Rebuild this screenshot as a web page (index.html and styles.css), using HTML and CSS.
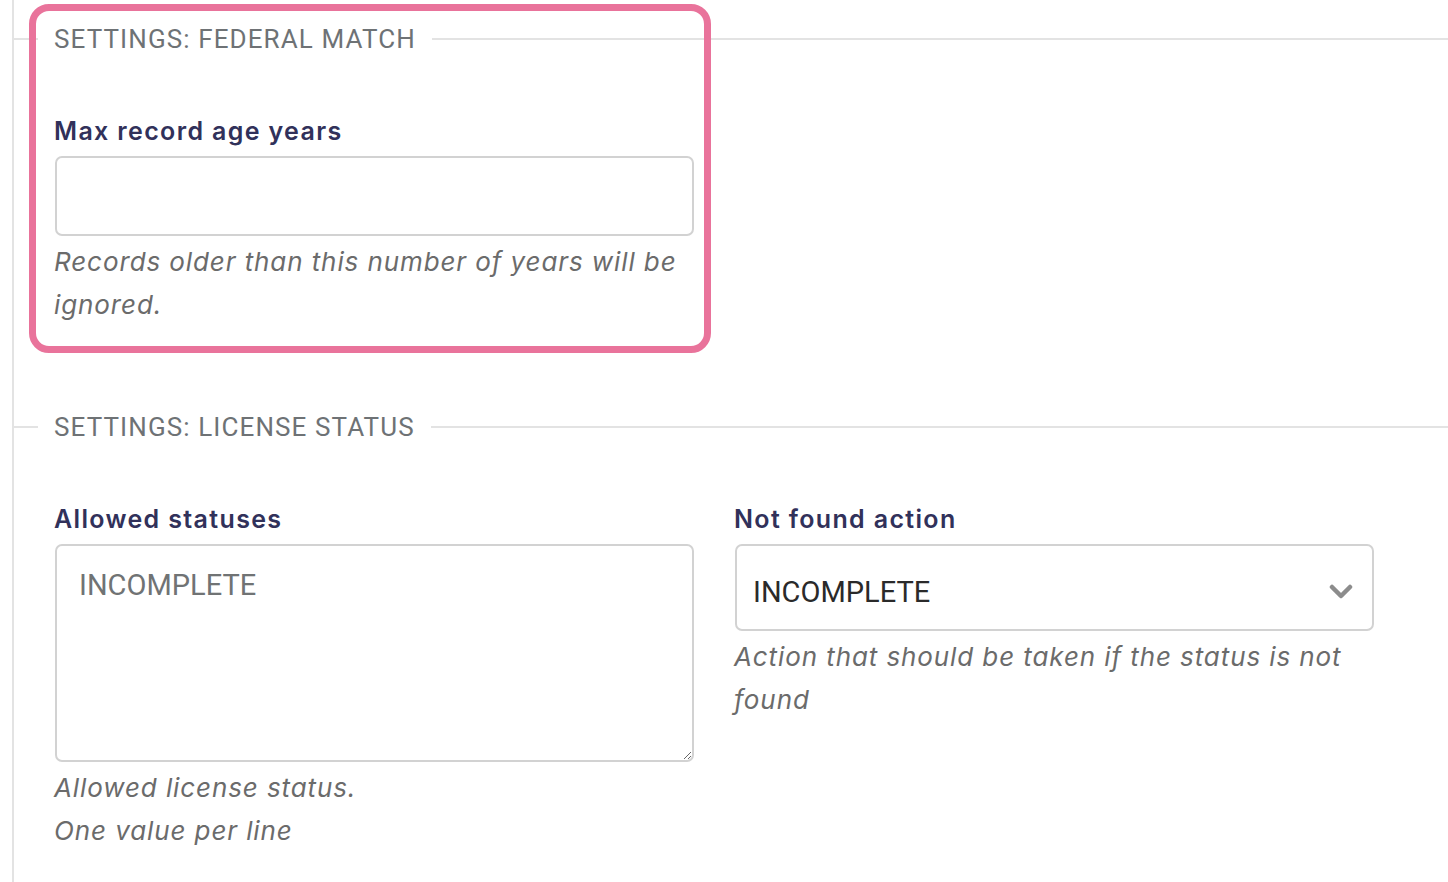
FILE: index.html
```html
<!DOCTYPE html>
<html lang="en">
<head>
<meta charset="utf-8">
<title>Settings</title>
<link rel="stylesheet" href="styles.css">
</head>
<body>
<div class="page">
  <fieldset class="group group-first">
    <legend class="group-title">SETTINGS: FEDERAL MATCH</legend>
    <div class="field field-single">
      <label class="field-label" for="maxage">Max record age years</label>
      <input class="text-input" id="maxage" type="text">
      <p class="field-help">Records older than this number of years will be ignored.</p>
    </div>
    <div class="highlight"></div>
  </fieldset>

  <fieldset class="group">
    <legend class="group-title">SETTINGS: LICENSE STATUS</legend>
    <div class="field-grid">
      <div class="field">
        <label class="field-label" for="allowed">Allowed statuses</label>
        <textarea class="text-area" id="allowed">INCOMPLETE</textarea>
        <p class="field-help">Allowed license status.<br>One value per line</p>
      </div>
      <div class="field">
        <label class="field-label" for="notfound">Not found action</label>
        <div class="select-wrap">
          <select class="select" id="notfound">
            <option>INCOMPLETE</option>
          </select>
          <svg class="chevron" width="24" height="16" viewBox="0 0 24 16" aria-hidden="true">
            <path d="M3 3 L12 12 L21 3" fill="none" stroke="#8c8c8c" stroke-width="4.5" stroke-linecap="round" stroke-linejoin="round"/>
          </svg>
        </div>
        <p class="field-help">Action that should be taken if the status is not found</p>
      </div>
    </div>
  </fieldset>
</div>
</body>
</html>
```

FILE: styles.css
```css
html, body {
  margin: 0;
  padding: 0;
  background: #ffffff;
}

body {
  font-family: Inter, "Liberation Sans", sans-serif;
  overflow: hidden;
  height: 882px;
}

.page {
  box-sizing: border-box;
  height: 882px;
  margin-left: 12px;
  padding-top: 24px;
  border-left: 2px solid #e3e3e3;
}

.group {
  position: relative;
  margin: 0;
  padding: 0 0 0 40px;
  border: none;
  border-top: 2px solid #e3e3e3;
  min-width: 0;
}

.group-first {
  padding-bottom: 86px;
}

.group-title {
  font-family: Roboto, "Liberation Sans", sans-serif;
  font-size: 26px;
  line-height: 30px;
  letter-spacing: 1.1px;
  color: #6e7275;
  padding: 0 16px;
  margin-left: -16px;
}

.field {
  display: flex;
  flex-direction: column;
  width: 639px;
}

.field-single {
  padding-top: 62px;
}

.field-grid {
  display: grid;
  grid-template-columns: 639px 639px;
  column-gap: 41px;
  padding-top: 62px;
}

.field-grid .field {
  width: auto;
}

.field-label {
  font-size: 25px;
  line-height: 30px;
  font-weight: 600;
  letter-spacing: 1.35px;
  color: #31315a;
  margin-bottom: 10px;
}

.text-input,
.text-area,
.select {
  box-sizing: border-box;
  width: 100%;
  margin: 0 0 0 1px;
  border: 2px solid #d2d2d2;
  border-radius: 7px;
  background: #ffffff;
  font-family: Roboto, "Liberation Sans", sans-serif;
  outline: none;
}

.text-input {
  height: 80px;
}

.text-area {
  height: 218px;
  padding: 22px 22px;
  font-size: 29px;
  line-height: 34px;
  color: #707374;
  resize: vertical;
}

.select-wrap {
  position: relative;
}

.select {
  appearance: none;
  -webkit-appearance: none;
  height: 87px;
  padding: 9px 60px 0 16px;
  font-size: 29px;
  color: #2a2a2a;
}

.chevron {
  position: absolute;
  right: 20px;
  top: 40px;
  pointer-events: none;
}

.field-help {
  margin: 4px 0 0 0;
  font-size: 26px;
  line-height: 43px;
  letter-spacing: 0.9px;
  font-style: italic;
  color: #6b6b6b;
}

.highlight {
  position: absolute;
  left: 15px;
  top: -50px;
  width: 668px;
  height: 335px;
  border: 7px solid #e9739b;
  border-radius: 20px;
  pointer-events: none;
}
```
